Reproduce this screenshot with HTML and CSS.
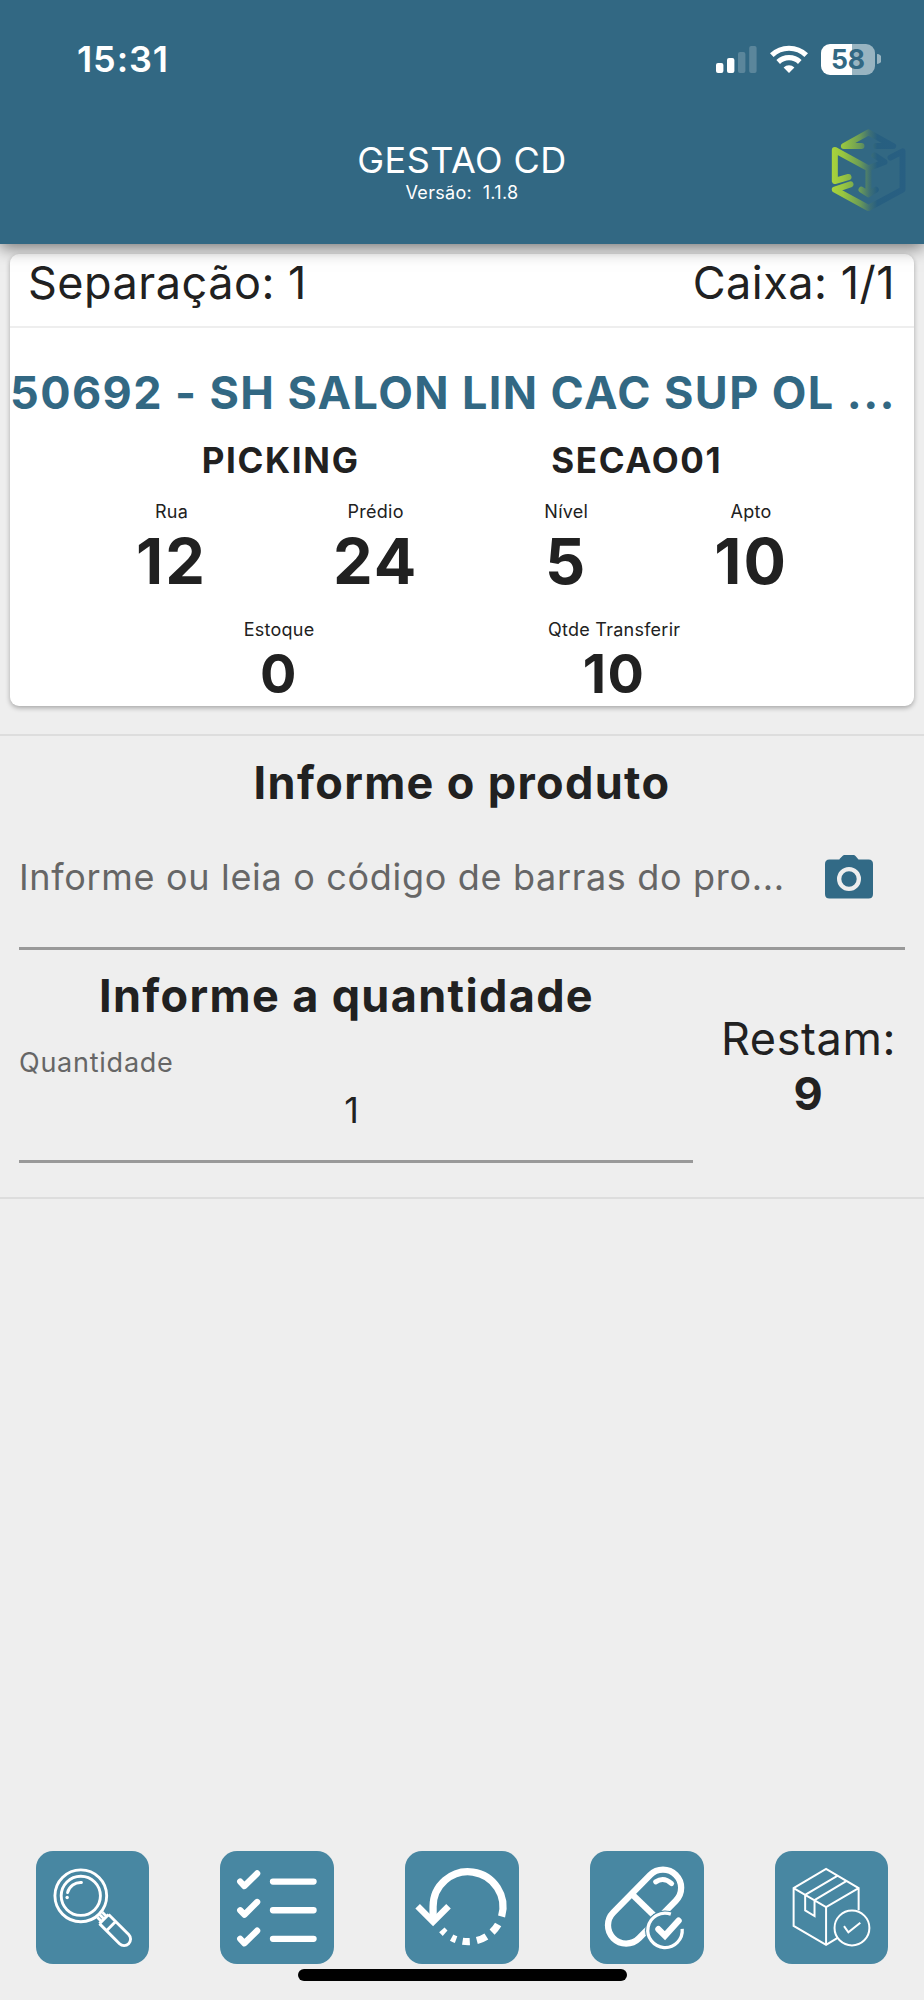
FILE: index.html
```html
<!DOCTYPE html>
<html lang="pt-BR">
<head>
<meta charset="utf-8">
<title>Gestao CD</title>
<link rel="stylesheet" href="styles.css">
</head>
<body>
<div class="screen">
  <header class="app-header">
    <div class="status-bar">
      <span class="clock">15:31</span>
      <div class="indicators">
        <svg class="signal" viewBox="0 0 41 27" fill="#fff"><rect x="0" y="17" width="7.4" height="10" rx="2"/><rect x="11" y="12" width="7.4" height="15" rx="2"/><rect x="22" y="6" width="7.4" height="21" rx="2" opacity=".2"/><rect x="33.2" y="0" width="7.4" height="27" rx="2" opacity=".2"/></svg>
        <svg class="wifi" viewBox="0 0 38 28" fill="none" stroke="#fff" stroke-width="5.2"><path d="M1.8 10.2A24.8 24.8 0 0 1 36.2 10.2"/><path d="M8.2 17A15.6 15.6 0 0 1 29.8 17"/><path d="M19 28L13.6 22.4A7.8 7.8 0 0 1 24.4 22.4Z" fill="#fff" stroke="none"/></svg>
        <div class="battery"><span class="battery-level">58</span></div>
        <svg class="battery-tip" viewBox="0 0 4 10"><path d="M0 0A5 5 0 0 1 0 10Z" fill="#98b4c1"/></svg>
      </div>
    </div>
    <div class="title-bar">
      <div class="titles">
        <h1 class="title">GESTAO CD</h1>
        <p class="version">Versão:&nbsp; 1.1.8</p>
      </div>
      <svg class="logo" viewBox="390 295 230 252" fill="none" stroke-width="18" stroke-linecap="round" stroke-linejoin="round">
        <defs><linearGradient id="brand" gradientUnits="userSpaceOnUse" x1="395" y1="0" x2="615" y2="0"><stop offset="0" stop-color="#a8d33c"/><stop offset=".15" stop-color="#98c640"/><stop offset=".38" stop-color="#6c9c56"/><stop offset=".52" stop-color="#3d6f76"/><stop offset=".62" stop-color="#275f80"/><stop offset="1" stop-color="#285f82"/></linearGradient></defs>
        <g stroke="url(#brand)"><path d="M484 349H431L505 308L579 349H528"/><path d="M445 442L404 454V361L505 416V492M484 480L505 494L527 480M505 416L553 397L523 377"/><path d="M451 464L404 480L505 535L607 480V365L571 384"/></g>
      </svg>
    </div>
  </header>

  <main class="content">
    <section class="card">
      <div class="card-head"><span>Separação: 1</span><span>Caixa: 1/1</span></div>
      <h2 class="product">50692 - SH SALON LIN CAC SUP OL ...</h2>
      <div class="row sector"><span>PICKING</span><span>SECAO01</span></div>
      <div class="row address">
        <div class="cell"><span class="label">Rua</span><span class="value">12</span></div>
        <div class="cell"><span class="label">Prédio</span><span class="value">24</span></div>
        <div class="cell"><span class="label">Nível</span><span class="value">5</span></div>
        <div class="cell"><span class="label">Apto</span><span class="value">10</span></div>
      </div>
      <div class="row amounts">
        <div class="cell"><span class="label">Estoque</span><span class="value">0</span></div>
        <div class="cell"><span class="label">Qtde Transferir</span><span class="value">10</span></div>
      </div>
    </section>

    <section class="form">
      <h2 class="heading">Informe o produto</h2>
      <div class="barcode-field">
        <span class="placeholder">Informe ou leia o código de barras do pro...</span>
        <svg class="camera" viewBox="0 0 48 44"><path fill="#326a86" fill-rule="evenodd" d="M14.5 4L17.5 1Q18.3 0 19.5 0H28.5Q29.7 0 30.5 1L33.5 4.5H43.5Q48 4.5 48 9V39Q48 43.5 43.5 43.5H4.5Q0 43.5 0 39V9Q0 4.5 4.5 4.5H14.5ZM24 12A12 12 0 1 0 24 36A12 12 0 1 0 24 12ZM24 16.3A7.7 7.7 0 1 1 24 31.7A7.7 7.7 0 1 1 24 16.3Z"/></svg>
      </div>
      <div class="quantity">
        <div class="quantity-entry">
          <h2 class="heading">Informe a quantidade</h2>
          <div class="quantity-field"><span class="field-label">Quantidade</span><span class="field-value">1</span></div>
        </div>
        <div class="remaining"><span>Restam:</span><strong>9</strong></div>
      </div>
    </section>
  </main>

  <footer class="toolbar">
    <button class="tool" aria-label="Pesquisar"><svg viewBox="0 0 114 114" fill="none" stroke="#fff" stroke-width="2.9"><g transform="translate(45 45) rotate(45)"><circle r="26"/><circle r="19.7"/><path d="M27 -3.5H33M27 3.5H33M27 0H33M33 -6.5V6.5M43 -6.5V6.5M33 -6.5H61.5A6.5 6.5 0 0 1 61.5 6.5H33"/></g><path d="M31.7 41.7A13.6 13.6 0 0 1 45.7 31.6" stroke-linecap="round"/><circle cx="31.3" cy="46.7" r="1.7" fill="#fff" stroke="none"/></svg></button>
    <button class="tool" aria-label="Lista"><svg viewBox="0 0 114 114" fill="none" stroke="#fff" stroke-width="6.3" stroke-linecap="round" stroke-linejoin="round"><path d="M20.3 30.7L24.5 35.2L37.3 22.5M53.2 30.7H94M20.3 59.5L24.5 64L37.3 51.3M53.2 59.5H94M20.3 88.2L24.5 92.7L37.3 80M53.2 88.2H94"/></svg></button>
    <button class="tool" aria-label="Refazer"><svg viewBox="0 0 114 114" fill="none" stroke="#fff" stroke-width="7.3"><path d="M28.2 70V56A35.1 35.1 0 1 1 97 65.7"/><path d="M12.7 55.5L28.2 71L43.7 55.5" stroke-width="6.5"/><circle cx="63.3" cy="56" r="35.1" pathLength="360" stroke-dasharray="0 30.5 16 11.8 17 11.7 12 11 8 13 7.5 221.5"/></svg></button>
    <button class="tool" aria-label="Medicamento"><svg viewBox="0 0 114 114" fill="none" stroke="#fff"><defs><mask id="badge-gap" maskUnits="userSpaceOnUse" x="0" y="0" width="114" height="114"><rect width="114" height="114" fill="#fff"/><circle cx="75.3" cy="79.7" r="20.5" fill="#000"/></mask></defs><g mask="url(#badge-gap)" stroke-width="6.3"><path d="M60.4 24.1A18.2 18.2 0 0 1 86.2 49.9L49.2 87.6A18.2 18.2 0 0 1 23.4 61.8Z"/><path d="M42 43.3L64 64.5"/></g><path d="M66 31Q74 25.5 82 32.7" stroke-width="5" stroke-linecap="round"/><path d="M92.6 78.2A17.3 17.3 0 1 1 81.2 63.4" stroke-width="3.3"/><path d="M68.7 78.5L75.3 85L89 70" stroke-width="6.3" stroke-linecap="round"/></svg></button>
    <button class="tool" aria-label="Finalizar caixa"><svg viewBox="0 0 114 114" fill="none" stroke="#fff" stroke-width="2"><path d="M63.3 87L51.3 94.3L18.7 75.3V37.3L51.3 18L84 37.3V59.5M18.7 37.3L51.3 56.3L84 37.3M51.3 56.3V94.3M63 24.7L30.3 44V59.7L39.7 65.3V49.3L72 30"/><circle cx="77.3" cy="77.3" r="17.5"/><path d="M69.3 75.5L73.7 81.7L85.7 72"/></svg></button>
  </footer>
  <div class="home-indicator"></div>
</div>
</body>
</html>
```
FILE: styles.css
```css
* { box-sizing: border-box; }

body {
  margin: 0;
  background: #eee;
  color: #212121;
  font-family: Inter, "Liberation Sans", sans-serif;
}

h1, h2, p { margin: 0; }
svg { display: block; flex: none; }

.screen {
  display: flex;
  flex-direction: column;
  width: 924px;
  height: 2000px;
  overflow: hidden;
}

.app-header {
  position: relative;
  z-index: 1;
  flex: none;
  height: 244px;
  background: #326883;
  color: #fff;
  box-shadow: 0 4px 16px rgba(0, 0, 0, .5);
}

.status-bar {
  display: flex;
  align-items: center;
  justify-content: space-between;
  height: 118px;
  padding: 0 43px 0 77px;
}

.clock { font-size: 36px; font-weight: 600; letter-spacing: .9px; }

.indicators { display: flex; align-items: center; }
.signal { width: 41px; height: 27px; margin-right: 13px; }
.wifi { width: 38px; height: 28px; margin-right: 13px; }

.battery {
  width: 54px;
  height: 31px;
  border-radius: 9px;
  background: linear-gradient(90deg, #fff 31px, #98b4c1 31px);
  color: #326883;
  font-size: 26.5px;
  font-weight: 700;
  line-height: 31px;
  text-align: center;
}

.battery-tip { width: 4px; height: 10px; margin-left: 2px; }

.title-bar {
  display: grid;
  grid-template-columns: 1fr auto 1fr;
  padding: 10px 17px 0;
}

.titles { grid-column: 2; padding-top: 13px; text-align: center; }
.title { font-size: 36px; font-weight: 400; line-height: 39px; letter-spacing: .45px; }
.version { font-size: 18px; line-height: 25px; letter-spacing: .3px; }
.logo { width: 77px; height: 84px; justify-self: end; }

.card {
  height: 452px;
  margin: 10px 10px 28px;
  border-radius: 9px;
  background: #fff;
  box-shadow: 0 2px 5px rgba(0, 0, 0, .3);
}

.card-head {
  display: flex;
  justify-content: space-between;
  height: 74px;
  padding: 0 19px 0 18px;
  border-bottom: 2px solid #eee;
  font-size: 45px;
  line-height: 57px;
  letter-spacing: .5px;
}

.product {
  padding: 37px 0 0;
  color: #326883;
  font-size: 45px;
  font-weight: 700;
  line-height: 55px;
  letter-spacing: 1.4px;
  white-space: nowrap;
}

.row { display: flex; justify-content: space-evenly; }
.sector { padding-top: 19px; font-size: 35px; font-weight: 700; line-height: 42px; letter-spacing: 1.65px; }
.cell { display: flex; flex-direction: column; align-items: center; }
.label { font-size: 18px; line-height: 24px; letter-spacing: .25px; }
.address { padding-top: 19px; }
.address .value { font-size: 63px; font-weight: 700; line-height: 74px; letter-spacing: 2px; }
.amounts { padding-top: 20px; }
.amounts .value { font-size: 54px; font-weight: 700; line-height: 63px; letter-spacing: 1.5px; }

.form {
  height: 465px;
  padding-top: 20px;
  border-top: 2px solid #ddd;
  border-bottom: 2px solid #ddd;
}

.heading { font-size: 45px; font-weight: 700; line-height: 54px; letter-spacing: 1.35px; text-align: center; }

.barcode-field {
  display: flex;
  align-items: center;
  justify-content: space-between;
  height: 140px;
  margin: 0 19px;
  padding: 0 32px 4px 0;
  border-bottom: 3px solid #999;
}

.placeholder { color: #666; font-size: 36px; letter-spacing: .68px; white-space: nowrap; }
.camera { width: 48px; height: 44px; }

.quantity { display: grid; grid-template-columns: 3fr 1fr; }
.quantity-entry { padding-top: 19px; }

.quantity-field {
  display: flex;
  flex-direction: column;
  height: 140px;
  margin-left: 19px;
  padding-top: 23px;
  border-bottom: 3px solid #999;
}

.field-label { color: #666; font-size: 27px; line-height: 34px; letter-spacing: .75px; }
.field-value { padding: 8px 9px 0 0; font-size: 36px; line-height: 44px; text-align: center; }

.remaining {
  display: flex;
  flex-direction: column;
  align-items: center;
  padding-top: 61px;
  font-size: 45px;
  line-height: 55px;
  letter-spacing: .6px;
}

.remaining strong { font-weight: 700; }

.toolbar { display: flex; justify-content: space-around; margin-top: auto; }

.tool {
  width: 113.5px;
  height: 113.5px;
  padding: 0;
  border: 0;
  border-radius: 17px;
  background: #4887a2;
}

.home-indicator {
  flex: none;
  width: 329px;
  height: 12px;
  margin: 5px auto 19px;
  border-radius: 6px;
  background: #000;
}
```
